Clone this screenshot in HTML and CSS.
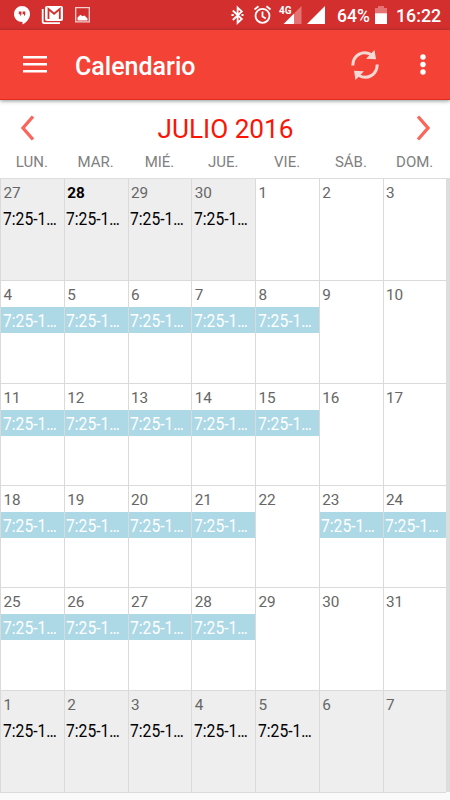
FILE: index.html
```
<!DOCTYPE html>
<html lang="es">
<head>
<meta charset="utf-8">
<title>Calendario</title>
<link rel="stylesheet" href="styles.css">
</head>
<body>
<div class="status">
  <svg class="status-icons" width="100" height="30" viewBox="0 0 100 30">
    <path fill="#fff" d="M22 6a8 8 0 0 0-8 8c0 4.600 3.500 8 8.500 8v2.500c4-2 7.500-6 7.500-10.500a8 8 0 0 0-8-8z"/>
    <path fill="#d32f2f" d="M18.800 11.500h2.700v3l-1.300 1.700v-2h-1.400zM22.600 11.500h2.700v3L24 16.200v-2h-1.400z"/>
    <path fill="none" stroke="#fff" stroke-width="1.800" d="M42.700 9v12.500q0 1.600 1.600 1.600H60"/>
    <rect x="45" y="6" width="18" height="15" rx="2" fill="#fff"/>
    <path fill="none" stroke="#d32f2f" stroke-width="1.800" d="M48.500 19V9l5.600 4.800L59.800 9v10"/>
    <path fill="none" stroke="#f4d0d0" stroke-width="1.300" d="M75.700 7.700h13.600v14.200H75.700z"/>
    <path fill="#fff" d="M77.500 20.500v-3l3-2.700 2 1.500 2-.8 3 3v2z"/>
  </svg>
  <svg class="status-icons" width="100" height="30" viewBox="0 0 100 30">
    <path fill="none" stroke="#fff" stroke-width="1.800" d="M2.800 10.500l9 8.500-4.200 4V7.500l4.200 4-9 8.500"/>
    <path fill="#fff" d="M1.500 13.900h2.200v2.200H1.500zM11.500 13.900h2v2.200h-2z"/>
    <g fill="none" stroke="#fff" stroke-width="1.800"><circle cx="32.500" cy="15.800" r="7"/><path d="M32.500 11.500v5l3.300 2M24.500 9.500l4-3.200M40.500 9.500l-4-3.200"/></g>
    <path fill="#e57373" d="M71.500 6v18H64V13.500z"/>
    <path fill="#fff" d="M64 13.500V24H53.500zM95 6v18H77z"/>
    <text class="network" x="49" y="14">4G</text>
  </svg>
  <span class="percent">64%</span>
  <svg class="battery" width="12" height="18" viewBox="0 0 12 18"><path fill="#e57373" d="M0 2h3V0h6v2h3v6H0z"/><path fill="#fff" d="M0 7.300h12V18H0z"/></svg>
  <span class="clock">16:22</span>
</div>
<header class="appbar">
  <svg class="menu" width="24" height="18" viewBox="0 0 24 18"><path fill="#fff" d="M0 0h24v2.500H0zM0 7h24v2.500H0zM0 14h24v2.500H0z"/></svg>
  <h1>Calendario</h1>
  <svg class="sync" width="28" height="30" viewBox="0 0 28 30">
    <g fill="none" stroke="#f3d8d4" stroke-width="3"><path d="M1.800 15.500C1.800 5.500 11.500 -.5 20.500 4.800"/><path d="M26.200 14.500C26.200 24.500 16.500 30.500 7.500 25.200"/></g>
    <path fill="#f3d8d4" d="M23.500 0l1.500 9.300-10-.6zM4.500 30L3 20.700l10 .6z"/>
  </svg>
  <svg class="more" width="6" height="21" viewBox="0 0 6 21"><g fill="#fff"><circle cx="3" cy="3" r="2.700"/><circle cx="3" cy="10.500" r="2.700"/><circle cx="3" cy="18" r="2.700"/></g></svg>
</header>
<div class="month">
  <svg width="14" height="26" viewBox="0 0 14 26"><path d="M12 1.500L2 13l10 11.500"/></svg>
  <h2>JULIO 2016</h2>
  <svg width="14" height="26" viewBox="0 0 14 26"><path d="M2 1.500L12 13 2 24.500"/></svg>
</div>
<div class="weekdays"><span>LUN.</span><span>MAR.</span><span>MIÉ.</span><span>JUE.</span><span>VIE.</span><span>SÁB.</span><span>DOM.</span></div>
<main class="grid">
  <div class="day out"><b>27</b><p><i>7:25-1…</i></p></div>
  <div class="day out today"><b>28</b><p><i>7:25-1…</i></p></div>
  <div class="day out"><b>29</b><p><i>7:25-1…</i></p></div>
  <div class="day out"><b>30</b><p><i>7:25-1…</i></p></div>
  <div class="day"><b>1</b></div>
  <div class="day"><b>2</b></div>
  <div class="day"><b>3</b></div>

  <div class="day"><b>4</b><p><i>7:25-1…</i></p></div>
  <div class="day"><b>5</b><p><i>7:25-1…</i></p></div>
  <div class="day"><b>6</b><p><i>7:25-1…</i></p></div>
  <div class="day"><b>7</b><p><i>7:25-1…</i></p></div>
  <div class="day"><b>8</b><p><i>7:25-1…</i></p></div>
  <div class="day"><b>9</b></div>
  <div class="day"><b>10</b></div>

  <div class="day"><b>11</b><p><i>7:25-1…</i></p></div>
  <div class="day"><b>12</b><p><i>7:25-1…</i></p></div>
  <div class="day"><b>13</b><p><i>7:25-1…</i></p></div>
  <div class="day"><b>14</b><p><i>7:25-1…</i></p></div>
  <div class="day"><b>15</b><p><i>7:25-1…</i></p></div>
  <div class="day"><b>16</b></div>
  <div class="day"><b>17</b></div>

  <div class="day"><b>18</b><p><i>7:25-1…</i></p></div>
  <div class="day"><b>19</b><p><i>7:25-1…</i></p></div>
  <div class="day"><b>20</b><p><i>7:25-1…</i></p></div>
  <div class="day"><b>21</b><p><i>7:25-1…</i></p></div>
  <div class="day"><b>22</b></div>
  <div class="day"><b>23</b><p><i>7:25-1…</i></p></div>
  <div class="day"><b>24</b><p><i>7:25-1…</i></p></div>

  <div class="day"><b>25</b><p><i>7:25-1…</i></p></div>
  <div class="day"><b>26</b><p><i>7:25-1…</i></p></div>
  <div class="day"><b>27</b><p><i>7:25-1…</i></p></div>
  <div class="day"><b>28</b><p><i>7:25-1…</i></p></div>
  <div class="day"><b>29</b></div>
  <div class="day"><b>30</b></div>
  <div class="day"><b>31</b></div>

  <div class="day out"><b>1</b><p><i>7:25-1…</i></p></div>
  <div class="day out"><b>2</b><p><i>7:25-1…</i></p></div>
  <div class="day out"><b>3</b><p><i>7:25-1…</i></p></div>
  <div class="day out"><b>4</b><p><i>7:25-1…</i></p></div>
  <div class="day out"><b>5</b><p><i>7:25-1…</i></p></div>
  <div class="day out"><b>6</b></div>
  <div class="day out"><b>7</b></div>
</main>
</body>
</html>
```
FILE: styles.css
```
* { box-sizing: border-box; margin: 0; }
body {
  width: 450px;
  height: 800px;
  overflow: hidden;
  background: #fafafa;
  font-family: Roboto, "Liberation Sans", sans-serif;
}
svg { display: block; flex: none; }
.status {
  display: flex;
  align-items: center;
  height: 30px;
  background: #d32f2f;
  color: #fff;
  font-size: 17.500px;
  font-weight: 500;
  line-height: 30px;
}
.status-icons + .status-icons { margin-left: 130px; }
.network { fill: #fff; font-size: 10px; font-weight: 700; }
.percent { width: 38px; margin-left: 7px; padding-top: 2px; }
.clock { margin-left: 9px; padding-top: 2px; font-size: 17.800px; }
.appbar {
  position: relative;
  display: flex;
  align-items: center;
  height: 70px;
  padding: 0 24px 0 23px;
  background: #f44336;
  border-bottom: 1px solid #e42a1c;
  box-shadow: 0 1px 4px rgba(0, 20, 20, .45);
  color: #fff;
}
.appbar h1 {
  flex: 1;
  margin-left: 28px;
  padding-top: 4px;
  font-size: 25px;
  font-weight: 500;
  line-height: 30px;
}
.sync { margin-right: 41px; }
.month {
  display: flex;
  justify-content: space-between;
  height: 52px;
  padding: 15px 20px 0 21px;
  background: #fff;
}
.month path { fill: none; stroke: #f8665c; stroke-width: 3.300; }
.month h2 {
  color: #f91607;
  font-size: 26.200px;
  font-weight: 400;
  line-height: 28px;
}
.weekdays {
  display: grid;
  grid-template-columns: repeat(7, 63.800px);
  height: 26px;
  background: #fff;
  color: #808080;
  font-size: 15px;
  line-height: 20px;
  text-align: center;
}
.grid {
  display: grid;
  grid-template-columns: repeat(7, 63.750px);
  grid-template-rows: repeat(6, 102.350px);
  width: 450px;
  border-top: 1px solid #ddd;
  border-right: 4px solid #ddd;
  height: 614px;
}
.day {
  background: #fff;
  border-left: 1px solid #dadada;
  border-bottom: 1px solid #dadada;
  color: #666;
}
.day b {
  display: block;
  height: 26px;
  padding: 4px 0 0 2.500px;
  font-size: 15.300px;
  font-weight: 400;
  line-height: 20px;
}
.day p {
  height: 26px;
  padding-left: 1.500px;
  overflow: hidden;
  background: #add8e6;
  color: #fff;
  font-size: 17.800px;
  line-height: 27px;
  white-space: nowrap;
}
.day i {
  display: inline-block;
  font-style: normal;
  transform: scaleX(.88);
  transform-origin: left;
}
.out { background: #eee; }
.out p { background: none; color: #000; }
.today b { color: #000; font-weight: 700; }
```
